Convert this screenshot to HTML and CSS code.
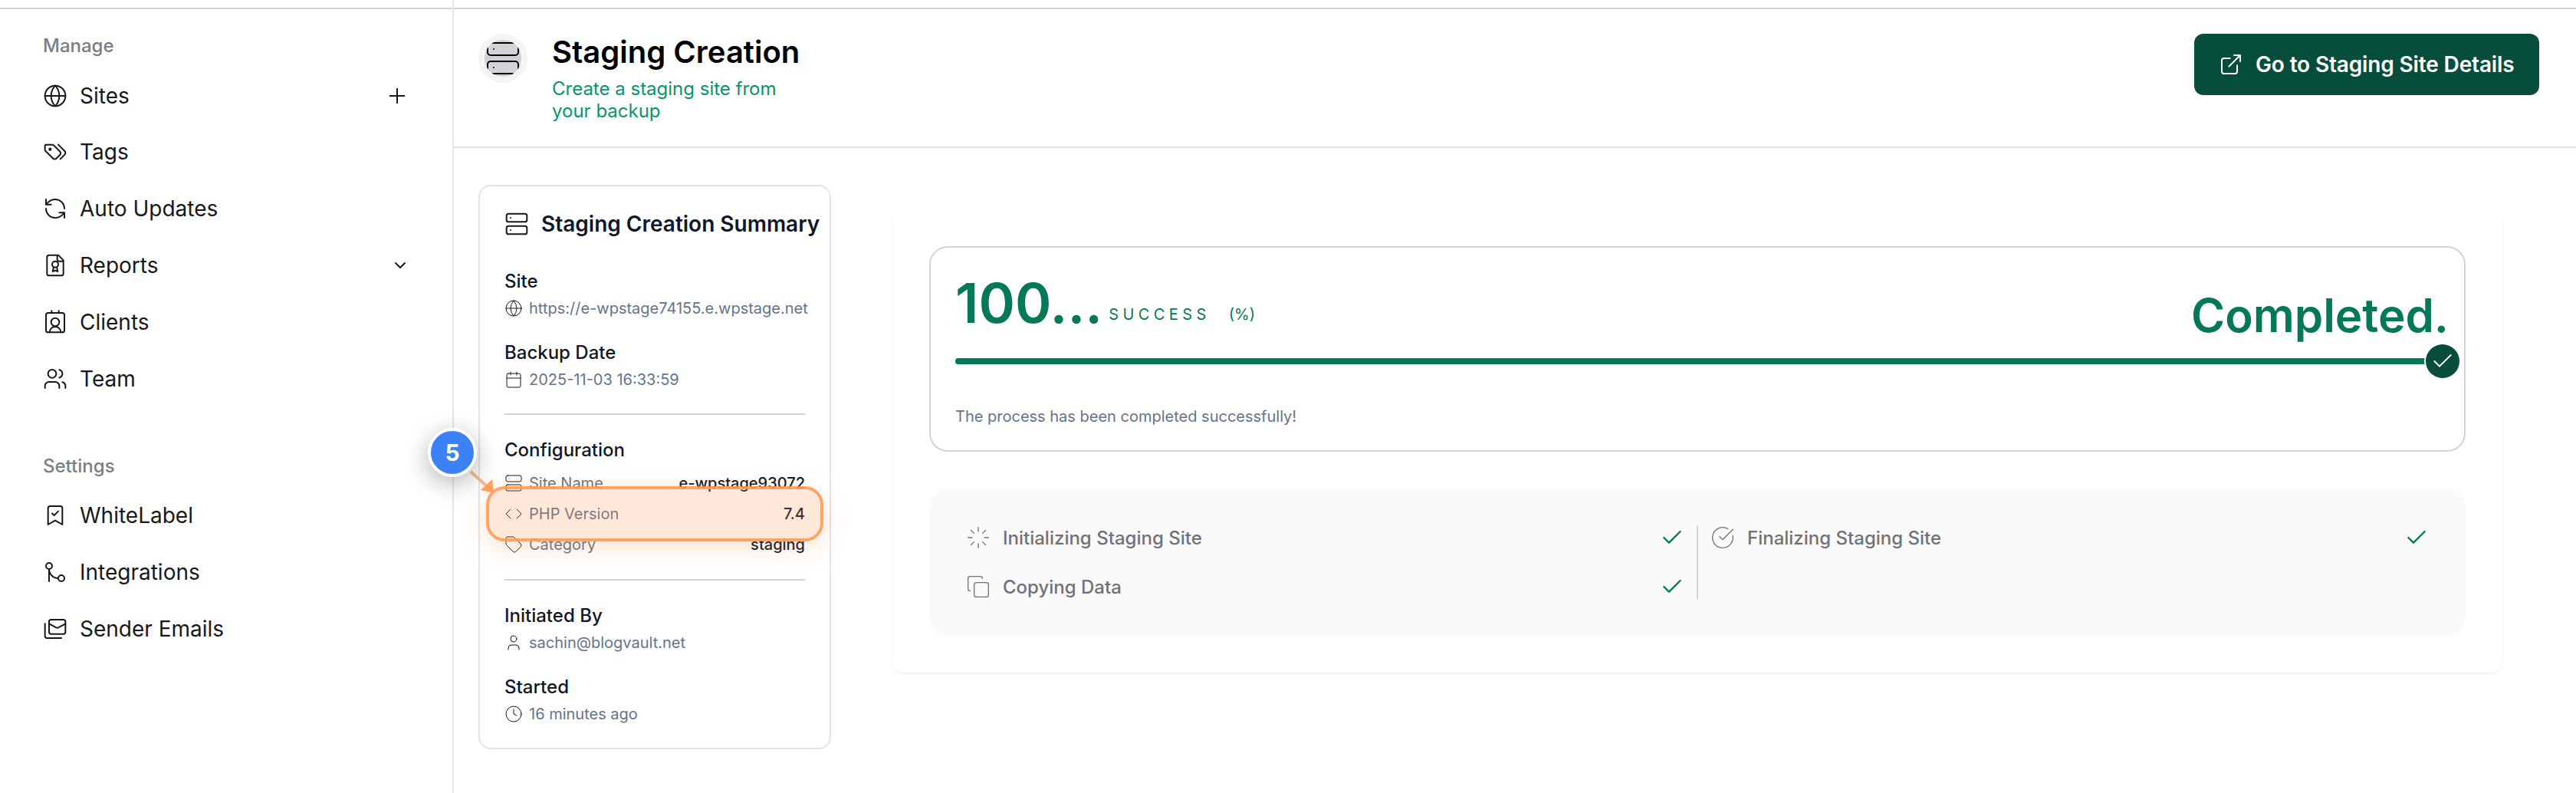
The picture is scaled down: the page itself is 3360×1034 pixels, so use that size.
FILE: index.html
```html
<!DOCTYPE html>
<html lang="en">
<head>
  <meta charset="UTF-8" />
  <meta name="viewport" content="width=device-width, initial-scale=1" />
  <title>Staging Creation</title>
  <link rel="stylesheet" href="styles.css">
</head>
<body>

<!-- Shared icons -->
<svg class="sprite" xmlns="http://www.w3.org/2000/svg">
  <symbol id="globe" viewBox="0 0 24 24"><circle cx="12" cy="12" r="10"/><path d="M12 2a14.5 14.5 0 0 0 0 20 14.5 14.5 0 0 0 0-20M2 12h20"/></symbol>
  <symbol id="server" viewBox="0 0 24 24"><rect x="2" y="2" width="20" height="8" rx="2"/><rect x="2" y="14" width="20" height="8" rx="2"/><path d="M6 6h.01M6 18h.01"/></symbol>
  <symbol id="check" viewBox="0 0 24 24"><path d="M20 6 9 17l-5-5"/></symbol>
</svg>

<div class="layout">
  <aside class="sidebar">
    <div class="top-line"></div>
    <nav>
      <h4 class="nav-title">Manage</h4>
      <a class="nav-item">
        <svg class="icon"><use href="#globe"/></svg>
        <span>Sites</span>
        <svg class="icon action" viewBox="0 0 24 24"><path d="M5 12h14M12 5v14"/></svg>
      </a>
      <a class="nav-item">
        <svg class="icon" viewBox="0 0 24 24"><path d="M3 5h6.2a2 2 0 0 1 1.4.6l6 6a2.4 2.4 0 0 1 0 3.4l-3.4 3.4a2.4 2.4 0 0 1-3.4 0l-7.2-7.2A2 2 0 0 1 2 9.800V6a1 1 0 0 1 1-1zM15 5l6.300 6.300a2.400 2.400 0 0 1 0 3.400L17 19"/><circle class="dot" cx="7" cy="9.500" r="0.8"/></svg>
        <span>Tags</span>
      </a>
      <a class="nav-item">
        <svg class="icon" viewBox="0 0 24 24"><path d="M21 12a9 9 0 0 0-9-9 9.750 9.750 0 0 0-6.740 2.740L3 8M3 3v5h5M3 12a9 9 0 0 0 9 9 9.750 9.750 0 0 0 6.740-2.740L21 16M16 16h5v5"/></svg>
        <span>Auto Updates</span>
      </a>
      <a class="nav-item">
        <svg class="icon" viewBox="0 0 24 24"><path d="M15 2H6a2 2 0 0 0-2 2v16a2 2 0 0 0 2 2h12a2 2 0 0 0 2-2V7ZM14 2v4a2 2 0 0 0 2 2h4M10.500 13.500 9.500 18l2.500-1 2.500 1-1-4.500"/><circle cx="12" cy="11" r="3"/></svg>
        <span>Reports</span>
        <svg class="icon small action" viewBox="0 0 24 24"><path d="m6 9 6 6 6-6"/></svg>
      </a>
      <a class="nav-item">
        <svg class="icon" viewBox="0 0 24 24"><rect x="3" y="3" width="18" height="19" rx="2"/><circle cx="12" cy="12" r="4"/><path d="M6.500 22a5.500 5.500 0 0 1 11 0M8.500 1v2M15.500 1v2"/></svg>
        <span>Clients</span>
      </a>
      <a class="nav-item">
        <svg class="icon" viewBox="0 0 24 24"><path d="M16 21v-2a4 4 0 0 0-4-4H6a4 4 0 0 0-4 4v2M16 3.130a4 4 0 0 1 0 7.750M22 21v-2a4 4 0 0 0-3-3.870"/><circle cx="9" cy="7" r="4"/></svg>
        <span>Team</span>
      </a>

      <h4 class="nav-title settings">Settings</h4>
      <a class="nav-item">
        <svg class="icon" viewBox="0 0 24 24"><path d="m19 21-7-4-7 4V5a2 2 0 0 1 2-2h10a2 2 0 0 1 2 2ZM9 10l2 2 4-4"/></svg>
        <span>WhiteLabel</span>
      </a>
      <a class="nav-item">
        <svg class="icon" viewBox="0 0 24 24"><circle cx="18" cy="18" r="3"/><circle cx="6" cy="6" r="3"/><path d="M6 21V9a9 9 0 0 0 9 9"/></svg>
        <span>Integrations</span>
      </a>
      <a class="nav-item">
        <svg class="icon" viewBox="0 0 24 24"><rect x="6" y="3" width="16" height="14" rx="2"/><path d="m22 7-7.100 3.780a2 2 0 0 1-1.800 0L6 7M2 7v12a2 2 0 0 0 2 2h14"/></svg>
        <span>Sender Emails</span>
      </a>
    </nav>
  </aside>

  <main>
    <div class="top-line"></div>
    <header>
      <div class="header-icon"><div class="avatar"><svg class="icon"><use href="#server"/></svg></div></div>
      <div class="heading">
        <h1>Staging Creation</h1>
        <p>Create a staging site from your backup</p>
      </div>
      <button class="btn">
        <svg class="icon" viewBox="0 0 24 24"><path d="M15 3h6v6M10 14 21 3M18 13v6a2 2 0 0 1-2 2H5a2 2 0 0 1-2-2V8a2 2 0 0 1 2-2h6"/></svg>
        Go to Staging Site Details
      </button>
    </header>

    <div class="content">
      <section class="summary">
        <h2><svg class="icon"><use href="#server"/></svg>Staging Creation Summary</h2>

        <h3>Site</h3>
        <p class="value"><svg class="icon"><use href="#globe"/></svg>https://e-wpstage74155.e.wpstage.net</p>
        <h3>Backup Date</h3>
        <p class="value"><svg class="icon" viewBox="0 0 24 24"><path d="M8 2v4M16 2v4M3 10h18"/><rect x="3" y="4" width="18" height="18" rx="2"/></svg>2025-11-03 16:33:59</p>
        <hr>

        <h3>Configuration</h3>
        <ul class="config">
          <li><svg class="icon"><use href="#server"/></svg>Site Name <b>e-wpstage93072</b></li>
          <li><svg class="icon" viewBox="0 0 24 24"><path d="m16 18 6-6-6-6M8 6l-6 6 6 6"/></svg>PHP Version <b>7.4</b></li>
          <li><svg class="icon" viewBox="0 0 24 24"><path d="M12.590 2.590A2 2 0 0 0 11.170 2H4a2 2 0 0 0-2 2v7.170a2 2 0 0 0 .59 1.420l8.700 8.700a2.430 2.430 0 0 0 3.420 0l6.580-6.580a2.430 2.430 0 0 0 0-3.420z"/><circle class="dot" cx="7.500" cy="7.500" r="0.5"/></svg>Category <b>staging</b></li>
        </ul>
        <hr class="second">

        <h3>Initiated By</h3>
        <p class="value"><svg class="icon" viewBox="0 0 24 24"><path d="M19 21v-2a4 4 0 0 0-4-4H9a4 4 0 0 0-4 4v2"/><circle cx="12" cy="7" r="4"/></svg>sachin@blogvault.net</p>
        <h3>Started</h3>
        <p class="value"><svg class="icon" viewBox="0 0 24 24"><circle cx="12" cy="12" r="10"/><path d="M12 6v6l4 2"/></svg>16 minutes ago</p>
      </section>

      <section class="panel">
        <div class="progress-box">
          <div class="progress-head">
            <span class="percent">100...</span>
            <span class="status">SUCCESS</span>
            <span class="unit">(%)</span>
            <span class="completed">Completed.</span>
          </div>
          <div class="bar">
            <div class="bar-end"><svg class="icon"><use href="#check"/></svg></div>
          </div>
          <p class="message">The process has been completed successfully!</p>
        </div>

        <div class="steps">
          <div class="steps-col">
            <div class="step">
              <svg class="icon" viewBox="0 0 24 24"><path d="M12 2v4M16.200 7.800l2.900-2.900M18 12h4M16.200 16.200l2.900 2.900M12 18v4M4.900 19.100l2.900-2.900M2 12h4M4.900 4.900l2.900 2.900"/></svg>
              Initializing Staging Site
              <svg class="icon done"><use href="#check"/></svg>
            </div>
            <div class="step">
              <svg class="icon" viewBox="0 0 24 24"><rect x="8" y="8" width="14" height="14" rx="2"/><path d="M4 16c-1.100 0-2-.9-2-2V4c0-1.100.9-2 2-2h10c1.100 0 2 .9 2 2"/></svg>
              Copying Data
              <svg class="icon done"><use href="#check"/></svg>
            </div>
          </div>
          <div class="divider"></div>
          <div class="steps-col">
            <div class="step">
              <svg class="icon" viewBox="0 0 24 24"><path d="M21.801 10A10 10 0 1 1 17 3.335M9 11l3 3L22 4"/></svg>
              Finalizing Staging Site
              <svg class="icon done"><use href="#check"/></svg>
            </div>
          </div>
        </div>
      </section>
    </div>
  </main>
</div>

<!-- Guide callout -->
<div class="highlight"></div>
<svg class="arrow" viewBox="0 0 40 40"><path class="shaft" d="M4 5 26 25"/><path class="head" d="M34 33 32 15 17 29Z"/></svg>
<div class="marker">5</div>

</body>
</html>
```
FILE: styles.css
```css
* {
  box-sizing: border-box;
}
body {
  font-family: Inter, "Liberation Sans", sans-serif;
  background: #fff;
  color: #18181b;
  margin: 0;
  overflow: hidden;
}
h1, h2, h3, h4, p, ul {
  margin: 0;
  padding: 0;
}
.sprite {
  display: none;
}
.icon {
  width: 32px;
  height: 32px;
  flex: none;
  fill: none;
  stroke: currentColor;
  stroke-width: 1.5;
  stroke-linecap: round;
  stroke-linejoin: round;
}
.icon .dot {
  fill: currentColor;
}
.layout {
  display: flex;
  height: 1034px;
}
.top-line {
  height: 12px;
  border-bottom: 2px solid #d4d4d8;
}

/* Sidebar */
.sidebar {
  width: 592px;
  flex: none;
  border-right: 2px solid #e2e8f0;
}
nav {
  padding: 21px 56px 0;
}
.nav-title {
  height: 54.8px;
  line-height: 53px;
  font-size: 24px;
  font-weight: 500;
  color: #7c7c81;
}
.nav-title.settings {
  margin-top: 50px;
}
.nav-item {
  display: flex;
  align-items: center;
  gap: 16px;
  height: 73.8px;
  font-size: 28px;
}
.nav-item .action {
  margin-left: auto;
}
.icon.small {
  width: 24px;
  height: 24px;
  stroke-width: 2;
}

/* Page header */
main {
  flex: 1;
}
header {
  display: flex;
  align-items: flex-start;
  height: 181px;
  padding: 32px 48px 0 32px;
  border-bottom: 2px solid #e4e4e7;
}
.header-icon {
  padding: 8px;
  border-radius: 50%;
  background: #f4f4f5;
  margin-right: 32px;
}
.avatar {
  width: 48px;
  height: 48px;
  border-radius: 50%;
  background: #d1d1d3;
  overflow: hidden;
}
.avatar .icon {
  display: block;
  width: 48px;
  height: 48px;
  fill: #d4d3d9;
  stroke: #000;
  stroke-width: 1;
}
h1 {
  font-size: 40px;
  line-height: 48px;
  font-weight: 600;
  color: #000;
}
.heading p {
  width: 310px;
  margin-top: 9px;
  font-size: 24px;
  line-height: 29px;
  color: #059669;
}
.btn {
  display: flex;
  align-items: center;
  gap: 16px;
  height: 80px;
  width: 450px;
  margin-left: auto;
  padding: 0 32px;
  border: none;
  border-radius: 12px;
  background: #064e3b;
  color: #fff;
  font: 600 28px Inter, sans-serif;
  letter-spacing: -0.15px;
  white-space: nowrap;
}

/* Summary card */
.content {
  display: flex;
  align-items: flex-start;
  padding: 48px 0 0 32px;
}
.summary {
  width: 460px;
  height: 736px;
  padding: 32px;
  border: 2px solid #e4e4e7;
  border-radius: 16px;
  color: #0f172a;
}
.summary .icon {
  color: #18181b;
}
h2 {
  display: flex;
  align-items: center;
  gap: 16px;
  margin-bottom: 42px;
  font-size: 28px;
  line-height: 34px;
  font-weight: 600;
  white-space: nowrap;
}
h3 {
  font-size: 24px;
  line-height: 32px;
  font-weight: 500;
}
.value, .config li {
  display: flex;
  align-items: center;
  gap: 8px;
  font-size: 20px;
  color: #64748b;
  white-space: nowrap;
}
.value {
  height: 28px;
  margin: 5px 0 28px;
}
.value .icon, .config .icon {
  width: 24px;
  height: 24px;
  stroke-width: 1;
}
hr {
  height: 2px;
  margin: 30px 0;
  border: none;
  background: #d4d4d8;
}
hr.second {
  margin-top: 25px;
}
.config {
  list-style: none;
  margin-top: 7px;
}
.config li {
  height: 40px;
}
.config b {
  margin-left: auto;
  font-weight: 500;
  color: #0f172a;
}

/* Progress panel */
.panel {
  width: 2100px;
  margin: 32px 0 0 80px;
  padding: 48px;
  border-radius: 16px;
  box-shadow: 0 2px 4px rgba(0,0,0,0.06);
}
.progress-box {
  height: 268px;
  padding: 36px 32px 0;
  border: 2px solid #d4d4d8;
  border-radius: 24px;
}
.progress-head {
  display: flex;
  align-items: flex-start;
  height: 88px;
  color: #047857;
}
.percent {
  font-size: 72px;
  line-height: 72px;
  font-weight: 600;
}
.status, .unit {
  margin-top: 37px;
  font-size: 20px;
  line-height: 28px;
}
.status {
  margin-left: 8px;
  letter-spacing: 5.4px;
}
.unit {
  margin-left: 24px;
}
.completed {
  margin: 16px -12px 0 auto;
  font-size: 60px;
  line-height: 72px;
  font-weight: 600;
}
.bar {
  position: relative;
  height: 8px;
  margin-top: 20px;
  border-radius: 4px;
  background: #047857;
}
.bar-end {
  position: absolute;
  right: -26px;
  top: -18px;
  width: 44px;
  height: 44px;
  padding: 6px;
  border-radius: 50%;
  background: #064e3b;
  color: #fff;
  box-shadow: 0 0 0 2px #fff;
}
.message {
  margin-top: 54px;
  font-size: 20px;
  line-height: 28px;
  color: #64748b;
}
.steps {
  display: flex;
  gap: 16px;
  margin-top: 48px;
  padding: 48px;
  border-radius: 24px;
  background: #fafafa;
}
.steps-col {
  flex: 1;
  display: flex;
  flex-direction: column;
  gap: 32px;
}
.step {
  display: flex;
  align-items: center;
  gap: 16px;
  height: 32px;
  font-size: 24px;
  font-weight: 500;
  color: #71717a;
}
.step .icon {
  stroke-width: 1;
}
.step .done {
  margin-left: auto;
  stroke-width: 1.75;
  color: #047857;
}
.divider {
  width: 2px;
  background: #d4d4d8;
}

/* Callout */
.highlight {
  position: absolute;
  left: 634px;
  top: 634px;
  width: 440px;
  height: 72px;
  border: 4px solid rgba(255,154,82,0.9);
  border-radius: 24px;
  background: rgba(253,140,72,0.2);
  background-clip: padding-box;
  box-shadow: 0 8px 32px rgba(253,140,60,0.25);
}
.arrow {
  position: absolute;
  left: 610px;
  top: 610px;
  width: 40px;
  height: 40px;
}
.shaft {
  fill: none;
  stroke: #fdba86;
  stroke-width: 4;
}
.head {
  fill: #ffa05f;
}
.marker {
  position: absolute;
  left: 558px;
  top: 558px;
  width: 64px;
  height: 64px;
  border: 4px solid #fff;
  border-radius: 50%;
  background: #3b82f6;
  color: #fff;
  font-size: 30px;
  font-weight: 700;
  line-height: 56px;
  text-align: center;
  box-shadow: 0 8px 32px rgba(0,0,0,0.3);
}
```
